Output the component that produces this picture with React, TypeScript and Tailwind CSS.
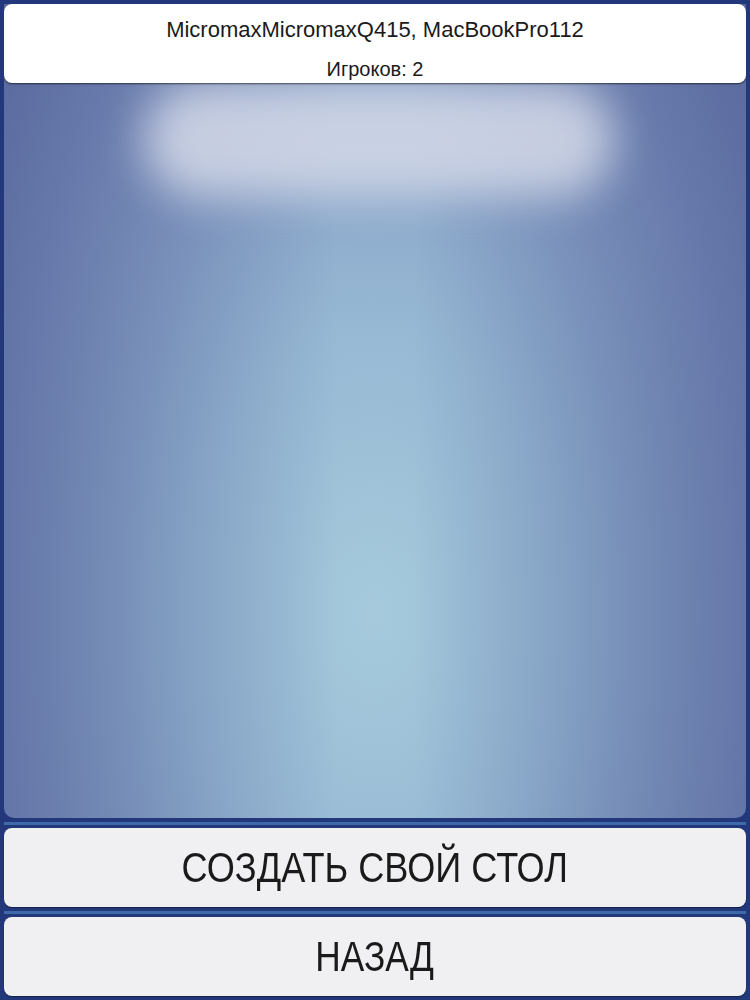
import React from "react";

export default function App() {
  return (
    <div className="w-[750px] h-[1000px] bg-[#22387a] p-[4px] flex flex-col font-['Liberation_Sans',Arial,sans-serif] text-[#1a1a1a]">
      <div className="flex flex-col h-[814px] rounded-b-[10px] overflow-hidden relative bg-[linear-gradient(to_right,rgba(80,94,150,0.6)_0%,rgba(80,94,150,0)_45%,rgba(80,94,150,0)_55%,rgba(80,94,150,0.6)_100%),radial-gradient(ellipse_75%_100%_at_50%_75%,#a6cadc_0%,#97b9d4_35%,#8299c2_70%,#6878aa_100%)]">
        <div className="absolute left-[140px] top-[78px] w-[470px] h-[115px] rounded-[58px] bg-[#d4d9e8] opacity-85 blur-[22px]"></div>
        <div className="relative z-10 h-[79px] bg-white rounded-[8px] shadow-[0_1px_2px_rgba(0,0,0,0.6)] flex flex-col items-center">
          <div className="mt-[13px] text-[22px] leading-[26px] whitespace-nowrap">MicromaxMicromaxQ415, MacBookPro112</div>
          <div className="mt-[14px] text-[20px] leading-[24px] whitespace-nowrap">Игроков: 2</div>
        </div>
      </div>
      <div className="h-[10px] flex flex-col justify-center">
        <div className="h-[3px] bg-[#4a7fc0] opacity-70"></div>
      </div>
      <div className="h-[79px] bg-[#f0f0f2] rounded-[8px] flex items-center justify-center shadow-[0_1px_1px_rgba(0,0,0,0.4)]">
        <span className="text-[42px] leading-none scale-x-[0.86] whitespace-nowrap">СОЗДАТЬ СВОЙ СТОЛ</span>
      </div>
      <div className="h-[10px] flex flex-col justify-center">
        <div className="h-[3px] bg-[#4a7fc0] opacity-70"></div>
      </div>
      <div className="h-[79px] bg-[#f0f0f2] rounded-[8px] flex items-center justify-center shadow-[0_1px_1px_rgba(0,0,0,0.4)]">
        <span className="text-[42px] leading-none scale-x-[0.84] whitespace-nowrap">НАЗАД</span>
      </div>
    </div>
  );
}
